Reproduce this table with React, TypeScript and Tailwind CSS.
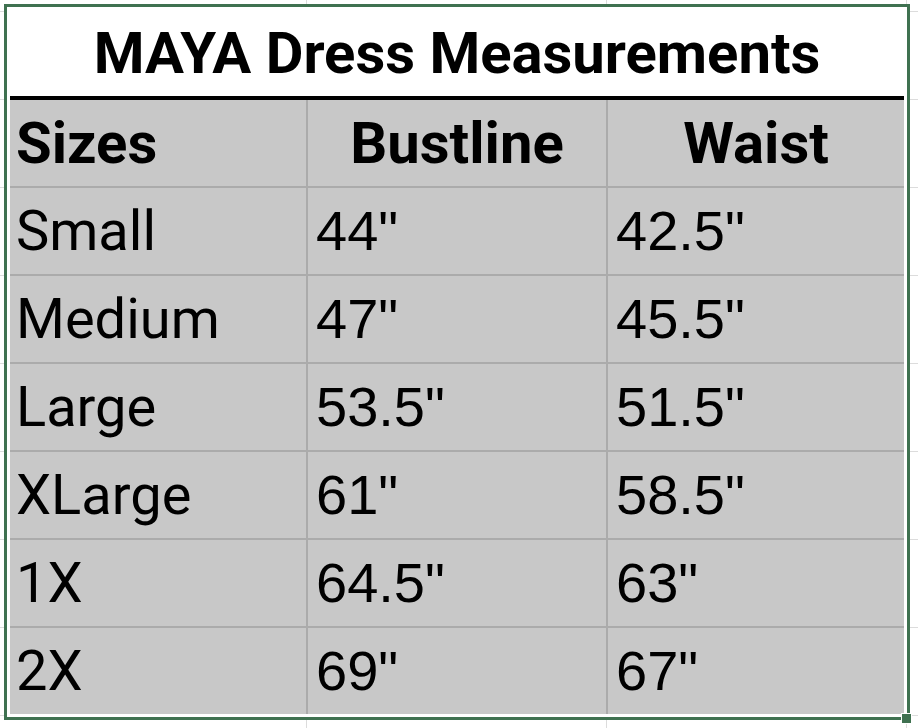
const rows = [
  { size: "Small", bust: '44"', waist: '42.5"' },
  { size: "Medium", bust: '47"', waist: '45.5"' },
  { size: "Large", bust: '53.5"', waist: '51.5"' },
  { size: "XLarge", bust: '61"', waist: '58.5"' },
  { size: "1X", bust: '64.5"', waist: '63"' },
  { size: "2X", bust: '69"', waist: '67"' },
];

const label = "font-['Roboto',sans-serif]";
const num = "font-['Liberation_Sans',Arial,sans-serif]";

export default function App() {
  return (
    <div className="h-[728px] w-[918px] overflow-hidden bg-white bg-[linear-gradient(to_right,transparent_306px,#dcdcdc_306px,#dcdcdc_307px,transparent_307px,transparent_606px,#dcdcdc_606px,#dcdcdc_607px,transparent_607px,transparent_906px,#dcdcdc_906px,#dcdcdc_907px,transparent_907px)]">
      <div className="h-full w-full bg-[repeating-linear-gradient(to_bottom,transparent_0px,transparent_11px,#dcdcdc_11px,#dcdcdc_12px,transparent_12px,transparent_88px)] pl-[4px] pt-[4px]">
        {/* selected range */}
        <div className="relative w-[906px] border-[3px] border-[#3f7150] bg-white p-[3px]">
          <div className="flex h-[86px] items-center justify-center bg-white text-[58px] font-bold leading-[86px] text-black">
            <span className={label}>MAYA Dress Measurements</span>
          </div>
          <div className="h-[4px] bg-black" />
          <div className="grid grid-cols-[296px_300px_298px] bg-[#c8c8c8] text-black">
            <div className={`${label} h-[86px] pl-[6px] text-[58px] font-bold leading-[86px]`}>Sizes</div>
            <div className={`${label} h-[86px] border-l-2 border-[#ababab] text-center text-[58px] font-bold leading-[86px]`}>
              Bustline
            </div>
            <div className={`${label} h-[86px] border-l-2 border-[#ababab] text-center text-[58px] font-bold leading-[86px]`}>
              Waist
            </div>
            {rows.map((r) => (
              <div key={r.size} className="contents">
                <div className={`${label} h-[88px] border-t-2 border-[#ababab] pl-[6px] text-[56px] leading-[86px]`}>{r.size}</div>
                <div className={`${num} h-[88px] border-l-2 border-t-2 border-[#ababab] pl-[8px] text-[56px] leading-[86px]`}>
                  {r.bust}
                </div>
                <div className={`${num} h-[88px] border-l-2 border-t-2 border-[#ababab] pl-[8px] text-[56px] leading-[86px]`}>
                  {r.waist}
                </div>
              </div>
            ))}
          </div>
          {/* fill handle */}
          <div className="absolute -bottom-[7px] -right-[5px] h-[11px] w-[11px] border border-white bg-[#3f7150]" />
        </div>
      </div>
    </div>
  );
}
